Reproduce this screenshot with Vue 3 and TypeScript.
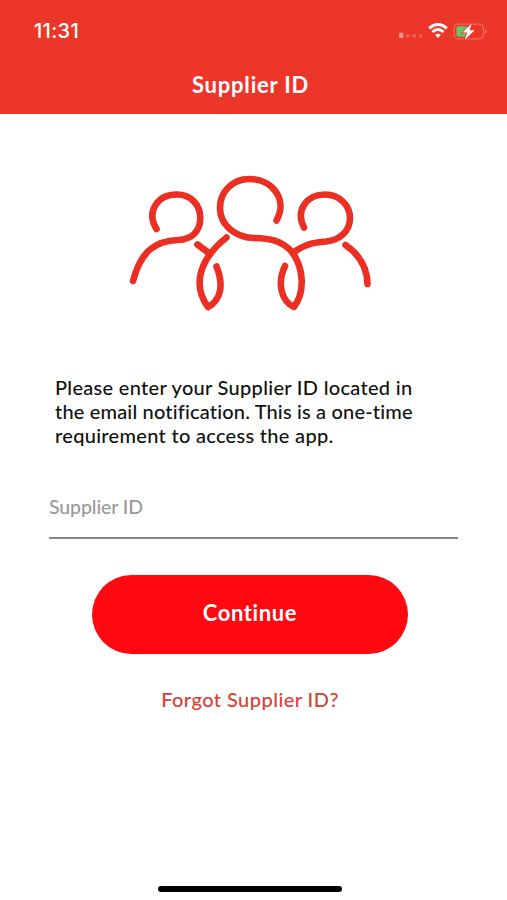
<script setup lang="ts">
import { ref } from 'vue'

const supplierId = ref<string>('')
const instructions: string[] = [
  'Please enter your Supplier ID located in',
  'the email notification. This is a one-time',
  'requirement to access the app.',
]
</script>

<template>
  <main class="screen">
    <header class="header">
      <div class="status">
        <span class="time">11:31</span>
        <svg class="indicators" width="92" height="22" viewBox="0 0 92 22" aria-hidden="true">
          <g fill="#fff">
            <rect x="3" y="12.5" width="4.5" height="5.5" rx="1.5" opacity=".45" />
            <rect x="10" y="14" width="3.5" height="3.5" rx="1" opacity=".2" />
            <rect x="16.5" y="14" width="3.5" height="3.5" rx="1" opacity=".2" />
            <rect x="23" y="14" width="3.5" height="3.5" rx="1" opacity=".2" />
            <path d="M39.1 14.8 Q42 12.6 44.9 14.8 L42 18Z" />
          </g>
          <path d="M33.2 8.3 Q42 0.8 50.8 8.3 M36.4 12 Q42 7.2 47.6 12" fill="none" stroke="#fff" stroke-width="2.9" />
          <rect x="58.2" y="4.2" width="29.2" height="14.6" rx="4" fill="none" stroke="#fff" stroke-opacity=".26" stroke-width="1.3" />
          <path d="M89 9 Q92 11.5 89 14Z" fill="#fff" opacity=".35" />
          <rect x="60.5" y="6.3" width="11" height="10.4" rx="2" fill="#65c766" />
          <path d="M75.8 3.2 L66.5 12.6 H71.2 L68.7 20 L78.6 10.2 H73.6Z" fill="#fff" stroke="#eb3629" stroke-width="1.6" paint-order="stroke" />
        </svg>
      </div>
      <h1 class="title">Supplier ID</h1>
    </header>

    <svg class="logo" width="260" height="150" viewBox="120 170 260 150" aria-hidden="true">
      <g fill="none" stroke="#eb3023" stroke-width="6.6" stroke-linecap="round" stroke-linejoin="round">
        <path d="M156.5 229 C146 212 157 194.5 177 194.5 C191 194.5 200.3 205 200.3 218 C200.3 232 191 239.5 178 240 C155 241 141 251 133 281" />
        <path d="M276.5 220.5 C288 200 273 179 249.5 179 C232 179 220 192 220 208 C220 225 235 237 253 238 C270 238.5 281 240 292 252 C303 267 306 291 294 307 C281 301 277 283 285 266" />
        <path d="M304 227.5 C295 210 307 194.5 325 194.5 C340 194.5 350 206 350 218 C350 231 340 240 326 241.5 C312 242.5 305 244.5 294 252" />
        <path d="M345.5 245 Q367 260 367.5 284" />
        <path d="M226.5 237.5 C196 262 194 288 208 307 C221 300 224 285 216.5 266.5" />
        <path d="M197.5 244.5 L207.5 252" />
      </g>
    </svg>

    <p class="instructions">
      <span v-for="(line, i) in instructions" :key="i" :class="['line', `line-${i + 1}`]">{{ line }}</span>
    </p>

    <form class="form" @submit.prevent>
      <input v-model="supplierId" class="field" type="text" placeholder="Supplier ID" aria-label="Supplier ID" />
      <button class="continue" type="submit">Continue</button>
      <a class="forgot">Forgot Supplier ID?</a>
    </form>

    <div class="home-bar"></div>
  </main>
</template>

<style>
body {
  margin: 0;
  background: #fff;
}
</style>

<style scoped>
.screen {
  box-sizing: border-box;
  width: 507px;
  height: 900px;
  display: flex;
  flex-direction: column;
  background: #fff;
  font-family: Lato, "Liberation Sans", sans-serif;
  overflow: hidden;
}

.header {
  flex: none;
  height: 114px;
  background: #eb3629;
  color: #fff;
}

.status {
  display: flex;
  justify-content: space-between;
  align-items: center;
  height: 22px;
  padding: 20px 19px 0 34px;
}

.time {
  font: 500 20px/22px Inter, sans-serif;
  letter-spacing: 0.3px;
}

.title {
  margin: 30px 0 0;
  padding-right: 6px;
  text-align: center;
  font-size: 22px;
  font-weight: 700;
  line-height: 26px;
  letter-spacing: 0.8px;
}

.logo {
  flex: none;
  margin: 56px 0 0 120px;
}

.instructions {
  margin: 56px 0 0 55px;
  font-size: 20px;
  font-weight: 500;
  line-height: 23.8px;
  color: #111;
}

.line {
  display: block;
  width: max-content;
  letter-spacing: 0.3px;
}

.line-2 {
  letter-spacing: 0.17px;
}

.form {
  display: flex;
  flex-direction: column;
  margin: 46.6px 49px 0;
}

.field {
  height: 45px;
  padding: 0 0 17px;
  box-sizing: border-box;
  border: 0;
  border-bottom: 2px solid #868686;
  border-radius: 0;
  outline: 0;
  background: transparent;
  font: 500 19.5px/26px Lato, sans-serif;
  letter-spacing: -0.1px;
  color: #111;
}

.field::placeholder {
  color: #999;
  opacity: 1;
}

.continue {
  width: 316px;
  height: 79px;
  margin: 36px 0 0 43px;
  padding: 0 0 2px;
  border: 0;
  border-radius: 40px;
  background: #ff0810;
  color: #fff;
  font: 700 22px/26px Lato, sans-serif;
  letter-spacing: 0.6px;
}

.forgot {
  margin: 32px 0 0;
  padding-right: 7px;
  text-align: center;
  font-size: 20px;
  font-weight: 500;
  line-height: 26px;
  letter-spacing: 0.45px;
  color: #dc3d32;
}

.home-bar {
  width: 184px;
  height: 6px;
  margin: auto 0 8px 158px;
  border-radius: 3px;
  background: #000;
}
</style>
